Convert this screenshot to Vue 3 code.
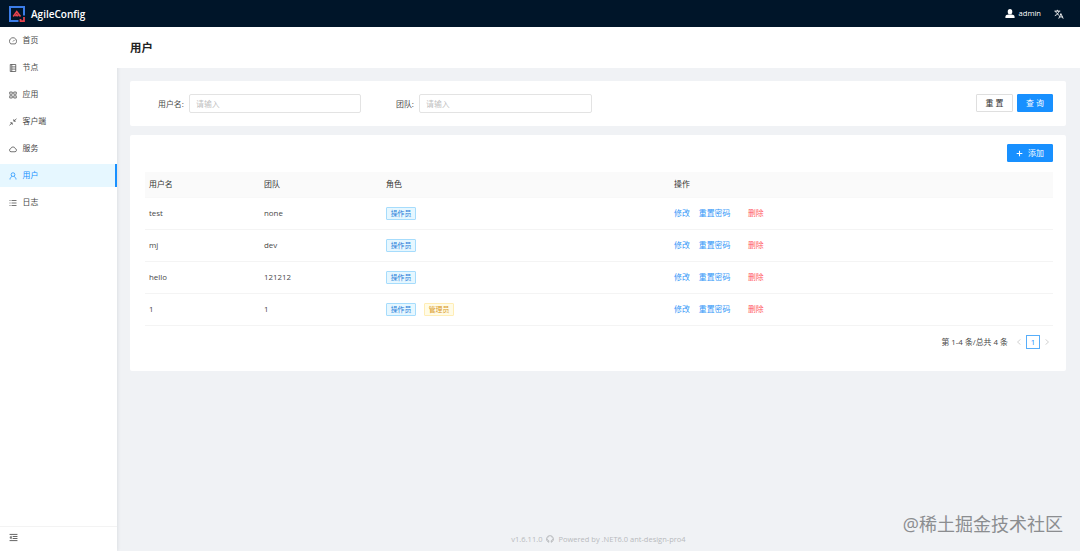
<template>
  <div class="layout">
    <!-- Top bar -->
    <header class="topbar">
      <svg class="logo" viewBox="0 0 32 32">
        <g fill="none">
          <path d="M19 30H2V2h28v17" stroke="#3b7de8" stroke-width="4" />
          <path d="M30 22v8h-7v-4" stroke="#e8434e" stroke-width="3.500" />
          <path d="M8.500 21l7-10 7.500 10M13 20.500l2.500-3 3 3" stroke="#e8434e" stroke-width="3.200" />
        </g>
      </svg>
      <h1>AgileConfig</h1>
      <div class="account">
        <svg class="avatar" viewBox="0 0 24 24">
          <ellipse cx="12" cy="7.5" rx="5.5" ry="6.5" fill="#fff" />
          <path d="M1 23v-3c0-4 4-5 7-5.500h8c3 .5 7 1.500 7 5.500v3z" fill="#fff" />
        </svg>
        <span>admin</span>
      </div>
      <svg class="lang" viewBox="0 0 24 24" fill="none" stroke="#fff" stroke-width="2.200">
        <path d="M1 5h14M8 2v3M4 5c1 5 5 8 8 10M12 5c-1 5-5 9-10 11" />
        <path d="M11.500 23l5-12 5.500 12M13.500 19h7" />
      </svg>
    </header>

    <div class="main">
      <!-- Side menu -->
      <aside class="sider">
        <ul>
          <li v-for="item in menu" :key="item.name" :class="{ active: item.name === current }">
            <svg viewBox="0 0 16 16"><path :d="item.icon" /></svg>
            <span>{{ item.name }}</span>
          </li>
        </ul>
        <div class="collapse">
          <svg viewBox="0 0 16 16"><path d="M1 2.500h14M6.500 6.200h8.500M6.500 9.800h8.500M1 13.500h14M4 6l-2.500 2L4 10z" /></svg>
        </div>
      </aside>

      <div class="page">
        <div class="page-header">
          <h2>用户</h2>
        </div>

        <div class="content">
          <!-- Search form -->
          <section class="card search">
            <label v-for="field in fields" :key="field" class="field">
              <span>{{ field }}:</span>
              <input placeholder="请输入" />
            </label>
            <div class="buttons">
              <button>重 置</button>
              <button class="primary">查 询</button>
            </div>
          </section>

          <!-- User list -->
          <section class="card list">
            <div class="toolbar">
              <button class="primary add">
                <svg viewBox="0 0 16 16"><path d="M8 1.500v13M1.500 8h13" /></svg>
                <span>添加</span>
              </button>
            </div>
            <table>
              <thead>
                <tr>
                  <th class="col-name">用户名</th>
                  <th class="col-team">团队</th>
                  <th class="col-role">角色</th>
                  <th>操作</th>
                </tr>
              </thead>
              <tbody>
                <tr v-for="user in users" :key="user.name">
                  <td>{{ user.name }}</td>
                  <td>{{ user.team }}</td>
                  <td>
                    <div class="tags">
                      <span v-for="role in user.roles" :key="role" class="tag" :class="{ gold: role === '管理员' }">{{ role }}</span>
                    </div>
                  </td>
                  <td>
                    <div class="actions">
                      <a>修改</a>
                      <a>重置密码</a>
                      <a class="danger">删除</a>
                    </div>
                  </td>
                </tr>
              </tbody>
            </table>
            <div class="pagination">
              <span>第 1-4 条/总共 4 条</span>
              <svg viewBox="0 0 8 8"><path d="M6 .5L2 4l4 3.500" /></svg>
              <span class="current">1</span>
              <svg viewBox="0 0 8 8"><path d="M2 .5L6 4 2 7.500" /></svg>
            </div>
          </section>
        </div>

        <footer>
          <span>v1.6.11.0</span>
          <svg viewBox="0 0 16 16">
            <path d="M5.500 14.500a6.800 6.800 0 1 1 5 0v-3M5.500 14.500v-3M3.500 3l2 .8M12.500 3l-2 .8M5.500 11.500c-2-1-2.500-2-2.500-4M10.500 11.500c2-1 2.500-2 2.500-4" />
          </svg>
          <span>Powered by .NET6.0 ant-design-pro4</span>
        </footer>
        <div class="watermark">@稀土掘金技术社区</div>
      </div>
    </div>
  </div>
</template>

<script setup>
import { ref } from 'vue'

const current = ref('用户')

const menu = [
  { name: '首页', icon: 'M3.500 13.800a7 7 0 1 1 9 0zM8 9l3-3' },
  { name: '节点', icon: 'M2.500 1h11v14h-11zM5.500 1v14M5.500 5.800h8M5.500 10.200h8' },
  { name: '应用', icon: 'M1.500 2h5v4.500h-5zM9.500 2h5v4.500h-5zM1.500 9.500h5v4.500h-5zM9.500 9.500h5v4.500h-5z' },
  { name: '客户端', icon: 'M15 1.500L10 6M9.500 2.500v4h4M1 14.500L6 10M2.500 9.500h4v4' },
  { name: '服务', icon: 'M4 13.500a3.200 3.200 0 0 1-.5-6.300 4.700 4.700 0 0 1 9 0 3.200 3.200 0 0 1-.5 6.300z' },
  { name: '用户', icon: 'M8 1.500a3.700 3.700 0 1 1 0 7.500 3.700 3.700 0 1 1 0-7.500M2 15c0-3.500 2-5 4-6M14 15c0-3.500-2-5-4-6' },
  { name: '日志', icon: 'M5 3h10M5 8h10M5 13h10M1 3h2M1 8h2M1 13h2' }
]

const fields = ['用户名', '团队']

const users = ref([
  { name: 'test', team: 'none', roles: ['操作员'] },
  { name: 'mj', team: 'dev', roles: ['操作员'] },
  { name: 'hello', team: '121212', roles: ['操作员'] },
  { name: '1', team: '1', roles: ['操作员', '管理员'] }
])
</script>

<style>
body {
  margin: 0;
  overflow: hidden;
}
</style>

<style scoped>
.layout {
  display: flex;
  flex-direction: column;
  height: 551px;
  font-family: "Open Sans", "Noto Sans CJK SC", sans-serif;
  font-size: 7.9px;
  line-height: 12px;
  color: #484848;
  background: #f0f2f5;
}

* { box-sizing: border-box; }

svg { display: block; flex: none; fill: none; }

.topbar {
  display: flex;
  align-items: center;
  flex: none;
  height: 27px;
  padding: 0 16px 0 9px;
  background: #001529;
  color: #fff;
}
.logo { width: 16px; height: 16px; }
.topbar h1 {
  margin: 1px 0 0 6px;
  font-size: 10px;
  font-weight: 600;
}
.account {
  display: flex;
  align-items: center;
  gap: 4px;
  margin-left: auto;
  font-size: 7.6px;
}
.account span { margin-top: -1px; }
.avatar { width: 10px; height: 11px; }
.lang { width: 10px; height: 10px; margin-left: 13px; }

.main { display: flex; flex: 1; min-height: 0; }

.sider {
  display: flex;
  flex-direction: column;
  flex: none;
  width: 117px;
  background: #fff;
  box-shadow: 1px 0 3px rgba(0, 21, 41, 0.08);
}
.sider ul {
  flex: 1;
  margin: 0;
  padding: 2px 0 0;
  list-style: none;
}
.sider li {
  display: flex;
  align-items: center;
  gap: 5.5px;
  height: 23px;
  margin-bottom: 4px;
  padding-left: 9px;
}
.sider li span { margin-top: -1px; }
.sider svg {
  width: 8px;
  height: 8px;
  stroke: currentColor;
  stroke-width: 1.5;
}
.sider li.active {
  background: #e6f7ff;
  border-right: 2px solid #1890ff;
  color: #1890ff;
}
.collapse {
  height: 25px;
  padding: 6px 9px;
  border-top: 1px solid #f3f3f3;
}
.collapse svg { width: 9px; height: 9px; }

.page {
  position: relative;
  display: flex;
  flex-direction: column;
  flex: 1;
}
.page-header {
  display: flex;
  align-items: center;
  height: 41px;
  padding: 0 13px;
  background: #fff;
}
.page-header h2 {
  margin: 0;
  font-size: 11.4px;
  font-weight: 600;
  color: #222;
}

.content {
  display: flex;
  flex-direction: column;
  gap: 9px;
  flex: 1;
  padding: 13px 14px 0 13px;
}
.card { background: #fff; border-radius: 2px; }

.search {
  display: flex;
  align-items: center;
  height: 45px;
  padding: 0 13px 0 28px;
}
.field { display: flex; align-items: center; margin-right: 35px; }
.field span { width: 31px; white-space: nowrap; }
.field + .field span { width: 23px; }
input {
  width: 172px;
  height: 19px;
  padding: 0 6px;
  border: 1px solid #e3e3e3;
  border-radius: 2px;
  font: inherit;
}
.field + .field input { width: 173px; }
input::placeholder { color: #bfbfbf; }

.buttons { display: flex; gap: 4px; margin: 0 0 1px auto; }
button {
  width: 37px;
  height: 18px;
  padding: 0;
  border: 1px solid #dfdfdf;
  border-radius: 1px;
  background: #fff;
  color: #333;
  font: inherit;
}
button.primary {
  width: 36px;
  border-color: #1890ff;
  background: #1890ff;
  color: #fff;
}
button.add {
  display: flex;
  align-items: center;
  justify-content: center;
  gap: 5px;
  width: 46px;
}
.add svg { width: 7px; height: 7px; stroke: #fff; stroke-width: 2.4; }

.list { height: 236px; padding: 0 13px 0 15px; }
.toolbar {
  display: flex;
  justify-content: flex-end;
  align-items: center;
  height: 37px;
  padding-bottom: 1px;
}

table {
  width: 100%;
  table-layout: fixed;
  border-collapse: separate;
  border-spacing: 0;
}
th, td { padding: 0 4px; text-align: left; }
th {
  height: 26px;
  padding-bottom: 1px;
  background: #fafafa;
  border-bottom: 1px solid #f8f8f8;
  font-weight: 400;
  color: #333;
}
td { height: 32px; padding-bottom: 1px; border-bottom: 1px solid #f4f4f4; }
.col-name { width: 115px; }
.col-team { width: 122px; }
.col-role { width: 288px; }

.tags { display: flex; gap: 8px; }
.tag {
  width: 30px;
  height: 13px;
  border: 1px solid #a6dcfc;
  border-radius: 1px;
  background: #e6f7ff;
  color: #2479d8;
  font-size: 6.9px;
  line-height: 11px;
  text-align: center;
}
.tag.gold {
  border-color: #ffedb5;
  background: #fffbe6;
  color: #d99a26;
}

.actions { display: flex; gap: 9px; color: #3297f8; }
.danger { margin-left: 8.5px; color: #ff5a5f; }

.pagination {
  display: flex;
  align-items: center;
  justify-content: flex-end;
  height: 31px;
  padding-right: 3px;
}
.pagination svg {
  width: 6px;
  height: 6px;
  margin: 0 4px 0 8px;
  stroke: #c4c4c4;
  stroke-width: 1;
}
.pagination .current + svg { margin: 0 0 0 4px; }
.current {
  width: 14px;
  height: 14px;
  border: 1px solid #58aefa;
  color: #1890ff;
  text-align: center;
}

footer {
  display: flex;
  align-items: center;
  justify-content: center;
  gap: 4px;
  height: 24px;
  font-size: 7.5px;
  color: #b8babd;
}
footer svg { width: 8px; height: 8px; stroke: #b0b2b5; stroke-width: 1.8; }

/* Text laid over the page corner */
.watermark {
  position: absolute;
  right: 17px;
  bottom: 15px;
  font-size: 18px;
  line-height: 24px;
  color: #8b8d90;
}
</style>
